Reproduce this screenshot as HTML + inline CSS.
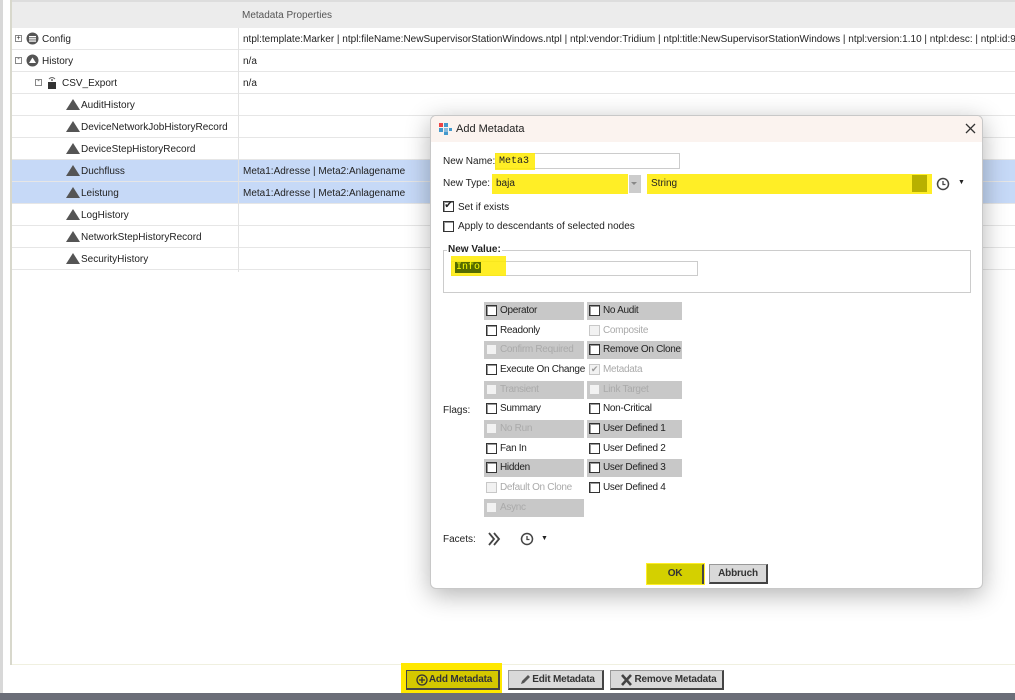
<!DOCTYPE html>
<html><head><meta charset="utf-8">
<style>
*{box-sizing:border-box;margin:0;padding:0}
body{width:1015px;height:700px;position:relative;overflow:hidden;background:#fff;font-family:"Liberation Sans",sans-serif;font-size:10px;color:#222;letter-spacing:0}
.a{position:absolute}
.row{position:absolute;left:12px;width:1003px;height:22px;border-bottom:1px solid #e6e6e6}
.row .t{position:absolute;top:6px;white-space:nowrap}
.row .v{position:absolute;left:231px;top:6px;white-space:nowrap}
.col{position:absolute;left:238px;top:28px;width:1px;height:244px;background:#e2e2e2}
.tri{position:absolute;width:0;height:0;border-left:7px solid transparent;border-right:7px solid transparent;border-bottom:11px solid #555;top:5px}
.sel{background:#c6d9f7}
.cb{position:absolute;width:11px;height:11px;border:1px solid #333;background:#fff;box-shadow:inset 1px 1px 0 #999}
.cb.d{border-color:#c8c8c8;box-shadow:none;background:#f2f2f2}
.fl{position:absolute;height:18px;width:100px;letter-spacing:-0.3px}
.fl.g{background:#c8c8c8}
.fl .cb{left:2px;top:3px}
.fl span{position:absolute;left:16px;top:3px;white-space:nowrap}
.fl.dis span{color:#aaa}
.btn{position:absolute;height:20px;background:#d9d9d9;border:1px solid #999;border-right:2px solid #444;border-bottom:2px solid #444;font-weight:bold;font-size:10px;text-align:center;line-height:17px;color:#333;letter-spacing:-0.2px}
.hl{position:absolute;background:rgba(255,235,0,0.85)}
</style></head><body>
<div class="a" style="left:0;top:0;width:3px;height:700px;background:#d8d8d8"></div>
<div class="a" style="left:10px;top:0;width:2px;height:665px;background:#d8d8cc"></div>
<div class="a" style="left:12px;top:0;width:1003px;height:2px;background:#ddd"></div>
<div class="a" style="left:12px;top:2px;width:1003px;height:26px;background:#ececec"></div>
<div class="a" style="left:242px;top:10px;color:#555">Metadata Properties</div>

<div class="row" style="top:28px"><div class="a" style="left:3px;top:7px;width:7px;height:7px;border:1px solid #888;font-size:7px;line-height:5px;text-align:center">+</div>
<svg class="a" style="left:14px;top:4px" width="13" height="13"><circle cx="6.5" cy="6.5" r="6" fill="#555"/><rect x="3" y="4" width="7" height="1.3" fill="#fff"/><rect x="3" y="6.2" width="7" height="1.3" fill="#fff"/><rect x="3" y="8.4" width="7" height="1.3" fill="#fff"/></svg>
<span class="t" style="left:30px">Config</span><span class="v">ntpl:template:Marker | ntpl:fileName:NewSupervisorStationWindows.ntpl | ntpl:vendor:Tridium | ntpl:title:NewSupervisorStationWindows | ntpl:version:1.10 | ntpl:desc: | ntpl:id:9</span></div>
<div class="row" style="top:50px"><div class="a" style="left:3px;top:7px;width:7px;height:7px;border:1px solid #888;font-size:7px;line-height:4px;text-align:center">-</div>
<svg class="a" style="left:14px;top:4px" width="13" height="13"><circle cx="6.5" cy="6.5" r="6" fill="#555"/><path d="M3 9 L6.5 3.5 L10 9Z" fill="#fff"/></svg>
<span class="t" style="left:30px">History</span><span class="v">n/a</span></div>
<div class="row" style="top:72px"><div class="a" style="left:23px;top:7px;width:7px;height:7px;border:1px solid #888;font-size:7px;line-height:4px;text-align:center">-</div>
<svg class="a" style="left:34px;top:3px" width="12" height="14"><rect x="2" y="7" width="8" height="7" fill="#333"/><path d="M3 4 Q6 1 9 4" stroke="#666" fill="none"/><circle cx="6" cy="5" r="1" fill="#666"/></svg>
<span class="t" style="left:50px">CSV_Export</span><span class="v">n/a</span></div>
<div class="row" style="top:94px"><div class="tri" style="left:54px"></div><span class="t" style="left:69px">AuditHistory</span></div>
<div class="row" style="top:116px"><div class="tri" style="left:54px"></div><span class="t" style="left:69px">DeviceNetworkJobHistoryRecord</span></div>
<div class="row" style="top:138px"><div class="tri" style="left:54px"></div><span class="t" style="left:69px">DeviceStepHistoryRecord</span></div>
<div class="row sel" style="top:160px"><div class="tri" style="left:54px"></div><span class="t" style="left:69px">Duchfluss</span><span class="v">Meta1:Adresse | Meta2:Anlagename</span></div>
<div class="row sel" style="top:182px"><div class="tri" style="left:54px"></div><span class="t" style="left:69px">Leistung</span><span class="v">Meta1:Adresse | Meta2:Anlagename</span></div>
<div class="row" style="top:204px"><div class="tri" style="left:54px"></div><span class="t" style="left:69px">LogHistory</span></div>
<div class="row" style="top:226px"><div class="tri" style="left:54px"></div><span class="t" style="left:69px">NetworkStepHistoryRecord</span></div>
<div class="row" style="top:248px"><div class="tri" style="left:54px"></div><span class="t" style="left:69px">SecurityHistory</span></div>
<div class="col"></div>
<div class="a" style="left:12px;top:664px;width:1003px;height:1px;background:#f0f0e0"></div>

<div class="hl" style="left:401px;top:663px;width:101px;height:30px;background:#ffe800"></div>
<div class="btn" style="left:406px;top:670px;width:94px;background:#d4c800;border-color:#444">
<svg style="position:absolute;left:9px;top:3px" width="12" height="12"><circle cx="6" cy="6" r="5" stroke="#333" stroke-width="1.3" fill="none"/><path d="M6 3v6M3 6h6" stroke="#333" stroke-width="1.3"/></svg><span style="margin-left:16px">Add Metadata</span></div>
<div class="btn" style="left:508px;top:670px;width:96px">
<svg style="position:absolute;left:10px;top:3px" width="12" height="12"><path d="M2 10 L3 7 L9 1 L11 3 L5 9Z" fill="#555"/></svg><span style="margin-left:16px">Edit Metadata</span></div>
<div class="btn" style="left:610px;top:670px;width:114px">
<svg style="position:absolute;left:9px;top:3px" width="13" height="12"><path d="M2 1L11 11M11 1L2 11" stroke="#444" stroke-width="2.6"/></svg><span style="margin-left:18px">Remove Metadata</span></div>
<div class="a" style="left:0;top:693px;width:1015px;height:7px;background:#6b6e78"></div>

<div class="a" style="left:430px;top:115px;width:553px;height:474px;background:#fff;border:1px solid #c8c8c8;border-radius:6px;box-shadow:0 6px 25px rgba(0,0,0,0.3);overflow:hidden">
 <div class="a" style="left:0;top:0;width:553px;height:26px;background:#fbf3ef"></div>
 <svg class="a" style="left:8px;top:6px" width="14" height="14"><rect x="0" y="1" width="4" height="4" fill="#e44"/><rect x="5" y="1" width="4" height="4" fill="#49c"/><rect x="0" y="6" width="4" height="4" fill="#49c"/><rect x="5" y="6" width="4" height="4" fill="#8bd"/><rect x="10" y="6" width="3" height="3" fill="#49c"/><rect x="5" y="10" width="4" height="3" fill="#49c"/></svg>
 <div class="a" style="left:25px;top:7px;font-size:11px">Add Metadata</div>
 <svg class="a" style="left:534px;top:7px" width="11" height="11"><path d="M1 1L10 10M10 1L1 10" stroke="#333" stroke-width="1.3"/></svg>

 <div class="a" style="left:12px;top:40px">New Name:</div>
 <div class="a" style="left:64px;top:37px;width:185px;height:16px;border:1px solid #ccc"></div>
 <div class="hl" style="left:64px;top:37px;width:40px;height:17px"></div>
 <div class="a" style="left:68px;top:40px;font-family:'Liberation Mono',monospace">Meta3</div>

 <div class="a" style="left:12px;top:62px">New Type:</div>
 <div class="hl" style="left:61px;top:58px;width:136px;height:20px"></div>
 <div class="a" style="left:198px;top:59px;width:12px;height:18px;background:#ccc"></div>
 <div class="a" style="left:200px;top:66px;border-left:3px solid transparent;border-right:3px solid transparent;border-top:3px solid #888"></div>
 <div class="a" style="left:65px;top:62px">baja</div>
 <div class="hl" style="left:216px;top:58px;width:285px;height:20px"></div>
 <div class="a" style="left:481px;top:59px;width:15px;height:17px;background:#b8b000"></div>
 <div class="a" style="left:220px;top:62px">String</div>
 <svg class="a" style="left:505px;top:61px" width="14" height="14"><circle cx="7" cy="7" r="5.5" stroke="#444" stroke-width="1.5" fill="none"/><path d="M7 4v3.5h2.5" stroke="#444" stroke-width="1.3" fill="none"/></svg>
 <div class="a" style="left:527px;top:63px;font-size:7px">▼</div>

 <div class="cb" style="left:12px;top:85px;font-size:10px;line-height:8px;text-align:center">✔</div>
 <div class="a" style="left:27px;top:86px">Set if exists</div>
 <div class="cb" style="left:12px;top:105px"></div>
 <div class="a" style="left:27px;top:105px">Apply to descendants of selected nodes</div>

 <div class="a" style="left:12px;top:134px;width:528px;height:43px;border:1px solid #ccc"></div>
 <div class="a" style="left:16px;top:128px;font-weight:bold;background:#fff;padding:0 1px">New Value:</div>
 <div class="a" style="left:20px;top:145px;width:247px;height:15px;border:1px solid #ccc"></div>
 <div class="hl" style="left:20px;top:140px;width:55px;height:20px"></div>
 <div class="a" style="left:24px;top:146px;background:#556b00;color:#ff0;font-family:'Liberation Mono',monospace;padding:0 1px">Info</div>

 <div class="a" style="left:12px;top:289px">Flags:</div>
 <div class="fl g" style="left:53px;top:186px"><div class="cb"></div><span>Operator</span></div>
 <div class="fl" style="left:53px;top:206px"><div class="cb"></div><span>Readonly</span></div>
 <div class="fl g dis" style="left:53px;top:225px"><div class="cb d"></div><span>Confirm Required</span></div>
 <div class="fl" style="left:53px;top:245px"><div class="cb"></div><span>Execute On Change</span></div>
 <div class="fl g dis" style="left:53px;top:265px"><div class="cb d"></div><span>Transient</span></div>
 <div class="fl" style="left:53px;top:284px"><div class="cb"></div><span>Summary</span></div>
 <div class="fl g dis" style="left:53px;top:304px"><div class="cb d"></div><span>No Run</span></div>
 <div class="fl" style="left:53px;top:324px"><div class="cb"></div><span>Fan In</span></div>
 <div class="fl g" style="left:53px;top:343px"><div class="cb"></div><span>Hidden</span></div>
 <div class="fl dis" style="left:53px;top:363px"><div class="cb d"></div><span>Default On Clone</span></div>
 <div class="fl g dis" style="left:53px;top:383px"><div class="cb d"></div><span>Async</span></div>
 <div class="fl g" style="left:156px;top:186px;width:95px"><div class="cb"></div><span>No Audit</span></div>
 <div class="fl dis" style="left:156px;top:206px;width:95px"><div class="cb d"></div><span>Composite</span></div>
 <div class="fl g" style="left:156px;top:225px;width:95px"><div class="cb"></div><span>Remove On Clone</span></div>
 <div class="fl dis" style="left:156px;top:245px;width:95px"><div class="cb d" style="font-size:9px;line-height:8px;text-align:center;color:#999">✔</div><span>Metadata</span></div>
 <div class="fl g dis" style="left:156px;top:265px;width:95px"><div class="cb d"></div><span>Link Target</span></div>
 <div class="fl" style="left:156px;top:284px;width:95px"><div class="cb"></div><span>Non-Critical</span></div>
 <div class="fl g" style="left:156px;top:304px;width:95px"><div class="cb"></div><span>User Defined 1</span></div>
 <div class="fl" style="left:156px;top:324px;width:95px"><div class="cb"></div><span>User Defined 2</span></div>
 <div class="fl g" style="left:156px;top:343px;width:95px"><div class="cb"></div><span>User Defined 3</span></div>
 <div class="fl" style="left:156px;top:363px;width:95px"><div class="cb"></div><span>User Defined 4</span></div>

 <div class="a" style="left:12px;top:418px">Facets:</div>
 <svg class="a" style="left:56px;top:416px" width="14" height="14"><path d="M2 1l5 6-5 6M7 1l5 6-5 6" stroke="#444" stroke-width="1.8" fill="none"/></svg>
 <svg class="a" style="left:89px;top:416px" width="14" height="14"><circle cx="7" cy="7" r="5.5" stroke="#444" stroke-width="1.5" fill="none"/><path d="M7 4v3.5h2.5" stroke="#444" stroke-width="1.3" fill="none"/></svg>
 <div class="a" style="left:110px;top:419px;font-size:7px">▼</div>

 <div class="hl" style="left:215px;top:447px;width:59px;height:22px"></div>
 <div class="btn" style="left:216px;top:448px;width:57px;background:#d4d000;border-color:#d4d000 #444 #d4d000 #d4d000;border-bottom:none">OK</div>
 <div class="btn" style="left:278px;top:448px;width:59px">Abbruch</div>
</div>
</body></html>
